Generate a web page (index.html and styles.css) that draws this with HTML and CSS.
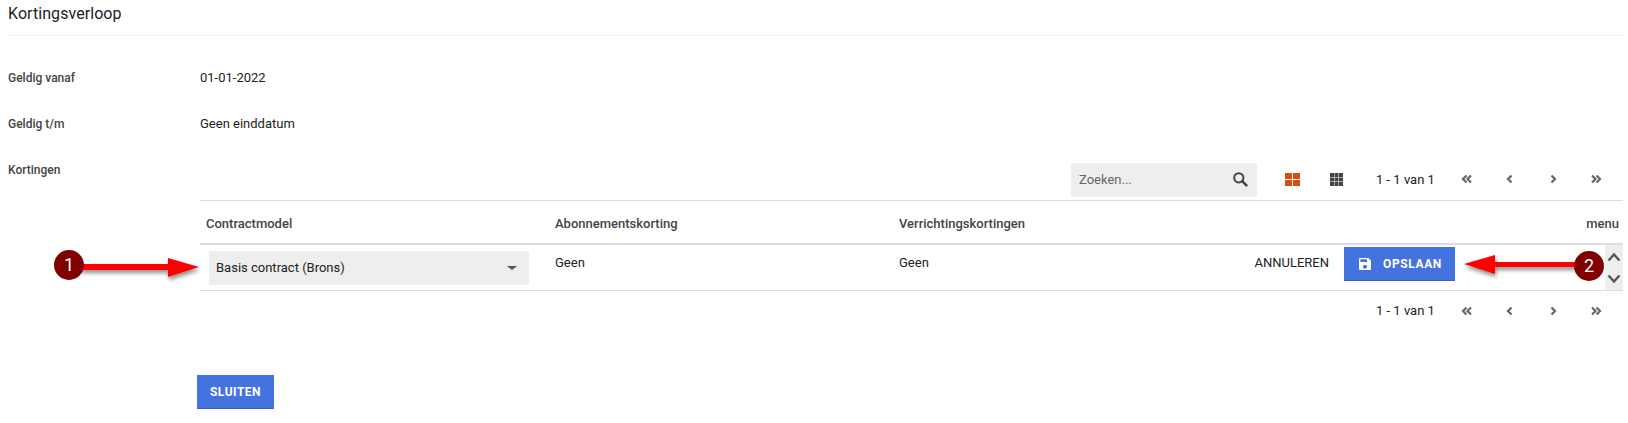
FILE: index.html
```html
<!DOCTYPE html>
<html>
<head>
    <meta charset="UTF-8">
    <title>Kortingsverloop</title>
    <link rel="stylesheet" href="styles.css">
</head>
<body>
    <h1 class="title">Kortingsverloop</h1>

    <div class="form-row">
        <div class="label">Geldig vanaf</div>
        <div class="value">01-01-2022</div>
    </div>
    <div class="form-row">
        <div class="label">Geldig t/m</div>
        <div class="value">Geen einddatum</div>
    </div>

    <div class="form-row discounts">
        <div class="label">Kortingen</div>
        <div class="grid-wrap">
            <div class="toolbar">
                <div class="search">
                    <span>Zoeken...</span>
                    <svg width="16" height="16" viewBox="0 0 16 16"><circle cx="6.800" cy="6.800" r="4.600" fill="none" stroke="#444" stroke-width="2"/><path d="M10.200 10.200 14.400 14.400" stroke="#444" stroke-width="2.600" stroke-linecap="round"/></svg>
                </div>
                <svg class="view-icon" width="15" height="15" viewBox="0 0 15 15"><path fill="#d84e0f" d="M0 1h7v6H0zM8 1h7v6H8zM0 8h7v6H0zM8 8h7v6H8z"/></svg>
                <svg class="view-icon second" width="15" height="15" viewBox="0 0 15 15"><path fill="#444" d="M1 1h4v4H1zM5.500 1h4v4h-4zM10 1h4v4h-4zM1 5.500h4v4H1zM5.500 5.500h4v4h-4zM10 5.500h4v4h-4zM1 10h4v4H1zM5.500 10h4v4h-4zM10 10h4v4h-4z"/></svg>
                <div class="pager">
                    <span class="count">1 - 1 van 1</span>
                    <svg class="chev" viewBox="0 0 14 12"><path d="M6.500 2.500 3 6l3.500 3.500M11 2.500 7.500 6l3.500 3.500"/></svg>
                    <svg class="chev" viewBox="0 0 14 12"><path d="M8.500 2.500 5 6l3.500 3.500"/></svg>
                    <svg class="chev" viewBox="0 0 14 12"><path d="M5.500 2.500 9 6l-3.500 3.500"/></svg>
                    <svg class="chev" viewBox="0 0 14 12"><path d="M3 2.500 6.500 6 3 9.500M7.500 2.500 11 6l-3.500 3.500"/></svg>
                </div>
            </div>

            <div class="grid-head">
                <div class="col-model">Contractmodel</div>
                <div class="col-sub">Abonnementskorting</div>
                <div class="col-act">Verrichtingskortingen</div>
                <div class="col-menu">menu</div>
            </div>
            <div class="grid-row">
                <div class="col-model">
                    <div class="select">
                        <span>Basis contract (Brons)</span>
                        <span class="caret"></span>
                    </div>
                </div>
                <div class="col-sub cell">Geen</div>
                <div class="col-act cell">Geen</div>
                <div class="row-actions">
                    <span class="cancel">ANNULEREN</span>
                    <button class="btn save">
                        <svg width="16" height="16" viewBox="0 0 24 24"><path fill="#fff" d="M17 3H5c-1.110 0-2 .9-2 2v14c0 1.100.89 2 2 2h14c1.100 0 2-.9 2-2V7l-4-4zm-5 16c-1.660 0-3-1.340-3-3s1.340-3 3-3 3 1.340 3 3-1.340 3-3 3zm3-10H5V5h10v4z"/></svg>
                        OPSLAAN
                    </button>
                </div>
                <div class="scroller">
                    <svg width="16" height="12" viewBox="0 0 16 12"><path d="m2.500 9.500 5.500-6 5.500 6"/></svg>
                    <svg width="16" height="12" viewBox="0 0 16 12"><path d="m2.500 2.500 5.500 6 5.500-6"/></svg>
                </div>
            </div>
            <div class="toolbar bottom">
                <div class="pager">
                    <span class="count">1 - 1 van 1</span>
                    <svg class="chev" viewBox="0 0 14 12"><path d="M6.500 2.500 3 6l3.500 3.500M11 2.500 7.500 6l3.500 3.500"/></svg>
                    <svg class="chev" viewBox="0 0 14 12"><path d="M8.500 2.500 5 6l3.500 3.500"/></svg>
                    <svg class="chev" viewBox="0 0 14 12"><path d="M5.500 2.500 9 6l-3.500 3.500"/></svg>
                    <svg class="chev" viewBox="0 0 14 12"><path d="M3 2.500 6.500 6 3 9.500M7.500 2.500 11 6l-3.500 3.500"/></svg>
                </div>
            </div>
        </div>
    </div>

    <button class="btn close">SLUITEN</button>

    <!-- annotations on top of the screenshot -->
    <svg class="arrow" width="1628" height="423" viewBox="0 0 1628 423">
        <defs>
            <filter id="shadow" x="-10%" y="-50%" width="120%" height="220%">
                <feDropShadow dx="1" dy="3" stdDeviation="2" flood-color="#000" flood-opacity=".45"/>
            </filter>
        </defs>
        <g filter="url(#shadow)">
            <path fill="#f00" d="M80 264h88v-6l31 9-31 10v-7H80z"/>
            <path fill="#f00" d="M1580 262h-85v-7l-31 9 31 10v-7h85z"/>
        </g>
    </svg>
    <div class="marker one">1</div>
    <div class="marker two">2</div>
</body>
</html>
```

FILE: styles.css
```css
body {
    font-family: Roboto, Arial, sans-serif;
    font-size: 13px;
    color: #222;
    margin: 0;
    padding: 0 5px 0 8px;
    background: #fff;
}
.title {
    font-size: 16px;
    font-weight: 400;
    line-height: 27px;
    letter-spacing: .06px;
    height: 35px;
    margin: 0 0 18px;
    border-bottom: 1px solid #eee;
    box-sizing: content-box;
}
.form-row {
    display: flex;
    height: 46px;
    align-items: center;
}
.label {
    width: 192px;
    flex: none;
    padding-top: 1px;
    font-size: 12px;
    font-weight: 500;
    color: #444;
}
.value {
    font-size: 13px;
}
.discounts {
    height: auto;
    align-items: flex-start;
}
.discounts .label {
    padding-top: 0;
    margin-top: 17px;
}
.grid-wrap {
    flex: 1;
    padding-top: 17px;
}
.toolbar {
    display: flex;
    align-items: center;
    justify-content: flex-end;
    height: 37px;
    border-bottom: 1px solid #ddd;
}
.toolbar.bottom {
    height: 44px;
    border-bottom: 0;
}
.search {
    width: 186px;
    height: 34px;
    box-sizing: border-box;
    padding: 0 9px 2px 8px;
    margin: 0 28px 3px 0;
    background: #eee;
    color: #666;
    display: flex;
    align-items: center;
    justify-content: space-between;
}
.view-icon {
    margin: 0 29px 5px 0;
}
.view-icon.second {
    margin-right: 32px;
}
.pager {
    display: flex;
    align-items: center;
    margin-bottom: 5px;
}
.count {
    width: 84px;
}
.chev {
    width: 14px;
    height: 12px;
    margin-right: 29px;
    fill: none;
    stroke: #666;
    stroke-width: 2.200;
}
.pager .chev:last-child {
    margin-right: 20px;
}
.grid-head, .grid-row {
    display: flex;
    align-items: center;
}
.grid-head {
    height: 39px;
    padding-top: 3px;
    border-bottom: 2px solid #ddd;
    font-weight: 500;
    color: #444;
}
.grid-row {
    height: 45px;
    border-bottom: 1px solid #ddd;
}
.col-model {
    width: 349px;
    padding-left: 6px;
    flex: none;
}
.col-sub {
    width: 344px;
    flex: none;
}
.col-act {
    flex: none;
    width: 300px;
}
.cell {
    padding-bottom: 10px;
}
.col-menu {
    flex: 1;
    text-align: right;
    padding-right: 4px;
}
.select {
    width: 320px;
    height: 34px;
    margin-left: 3px;
    box-sizing: border-box;
    padding: 0 12px 0 7px;
    background: #eee;
    display: flex;
    align-items: center;
    justify-content: space-between;
}
.caret {
    border: 5px solid transparent;
    border-top: 4px solid #555;
    border-bottom: 0;
}
.row-actions {
    flex: 1;
    display: flex;
    align-items: center;
    justify-content: flex-end;
    padding-right: 168px;
    padding-bottom: 10px;
}
.cancel {
    margin-right: 15px;
}
.btn {
    font-family: Roboto, Arial, sans-serif;
    font-size: 12px;
    font-weight: 700;
    letter-spacing: .5px;
    color: #fff;
    background: #4472de;
    border: 0;
    border-bottom: 1px solid #3a5fbd;
    display: flex;
    align-items: center;
    justify-content: center;
    height: 34px;
    padding: 0;
}
.save {
    width: 111px;
    gap: 10px;
    letter-spacing: .6px;
    margin-bottom: -3px;
}
.close {
    width: 77px;
    margin: 40px 0 0 189px;
}
.scroller {
    width: 18px;
    height: 45px;
    margin-left: -18px;
    background: #eee;
    display: flex;
    flex-direction: column;
    align-items: center;
    justify-content: center;
    gap: 10px;
    flex: none;
}
.scroller svg {
    fill: none;
    stroke: #555;
    stroke-width: 2.400;
}
.arrow {
    position: absolute;
    left: 0;
    top: 0;
    pointer-events: none;
}
.marker {
    position: absolute;
    width: 30px;
    height: 30px;
    border-radius: 50%;
    background: #800000;
    color: #fff;
    font-size: 18px;
    line-height: 30px;
    text-align: center;
}
.marker.one {
    left: 54px;
    top: 250px;
}
.marker.two {
    left: 1574px;
    top: 251px;
}
```
